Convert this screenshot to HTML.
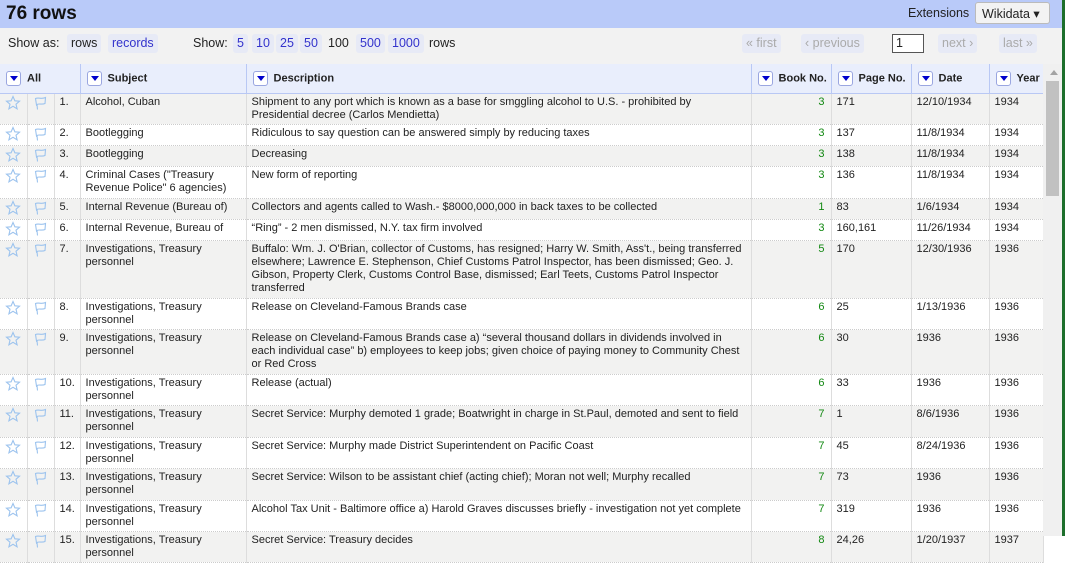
<!DOCTYPE html>
<html><head><meta charset="utf-8"><style>
*{box-sizing:border-box;margin:0;padding:0}
body{width:1065px;height:536px;overflow:hidden;background:#fff;font-family:"Liberation Sans",Arial,sans-serif;font-size:11px;color:#222;position:relative}
#top{position:absolute;left:0;top:0;width:1062px;height:28px;background:#b9caf9}
#top h1{position:absolute;left:6px;top:3px;font-size:19px;font-weight:bold;color:#111}
#ext{position:absolute;left:908px;top:6px;font-size:12.5px}
#wd{position:absolute;left:975px;top:2px;width:75px;height:22px;border:1px solid #bbb;border-radius:3px;background:#f3f3f3;font-size:12.5px;padding:3px 0 0 6px}
#bar{position:absolute;left:0;top:28px;width:1062px;height:36px;background:#f2f2f2;font-size:12.5px}
.t{position:absolute;top:8px}
.b{position:absolute;top:6px;height:19px;padding:2px 4px;background:#e7eaf6;border-radius:3px;color:#3333cc}
#pg{position:absolute;left:892px;top:6px;width:32px;height:19px;border:1px solid #555;background:#fff;padding:1px 3px}
table{position:absolute;left:0;top:64px;border-collapse:collapse;table-layout:fixed;width:1043px}
th{height:29px;background:#e9eefc;border-right:1px solid #b9c8f4;border-bottom:1px solid #b9c8f4;text-align:left;font-size:11px;font-weight:bold;padding-left:6px;white-space:nowrap;overflow:hidden}
.dd{display:inline-block;width:15px;height:15px;border:1px solid #9aa6e0;border-radius:3px;background:#fff;vertical-align:middle;margin-right:6px;position:relative}
.dd:after{content:"";position:absolute;left:3px;top:4px;border-left:4px solid transparent;border-right:4px solid transparent;border-top:5px solid #0000cc}
td{vertical-align:top;padding:2px 5px 0 5px;line-height:13px;border-right:1px solid #ddd;border-bottom:1px dotted #ccc;overflow:hidden}
tr.o td{background:#f2f2f1}
td.n{text-align:right;color:#118811;padding-right:6px}
td.i{padding:1px 0 0 5px}
td.i svg{display:block}
</style></head><body>
<div id="top"><h1>76 rows</h1><div id="ext">Extensions</div><div id="wd">Wikidata ▾</div></div>
<div id="bar">
<span class="t" style="left:8px">Show as:</span>
<span class="b" style="left:67px;color:#222">rows</span>
<span class="b" style="left:108px">records</span>
<span class="t" style="left:193px">Show:</span>
<span class="b" style="left:233px">5</span><span class="b" style="left:252px">10</span><span class="b" style="left:276px">25</span><span class="b" style="left:300px">50</span>
<span class="t" style="left:328px;color:#222">100</span>
<span class="b" style="left:356px">500</span><span class="b" style="left:388px">1000</span>
<span class="t" style="left:429px">rows</span>
<span class="b" style="left:742px;color:#aaa">« first</span>
<span class="b" style="left:801px;color:#aaa">‹ previous</span>
<div id="pg">1</div>
<span class="b" style="left:938px;color:#aaa">next ›</span>
<span class="b" style="left:999px;color:#aaa">last »</span>
</div>
<svg width="0" height="0" style="position:absolute"><defs>
<symbol id="st" viewBox="0 0 16 16"><path d="M8 1.5l1.9 4.3 4.6.4-3.5 3 1.1 4.6L8 11.3l-4.1 2.5 1.1-4.6-3.5-3 4.6-.4z" fill="none" stroke="#9cc3ee" stroke-width="1.1"/></symbol>
<symbol id="fl" viewBox="0 0 16 16"><path d="M2.5 3.5c3-1.5 6 1 10-1l-.5 6c-2 1-4 .5-6 .5-1.5 0-2.5 1-2.5 1zM4 9.5l.5 5" fill="none" stroke="#9cc3ee" stroke-width="1.1"/></symbol>
</defs></svg>
<table>
<colgroup><col style="width:27px"><col style="width:27px"><col style="width:26px"><col style="width:166px"><col style="width:505px"><col style="width:80px"><col style="width:80px"><col style="width:78px"><col style="width:54px"></colgroup>
<tr><th colspan="3"><span class="dd"></span>All</th><th><span class="dd"></span>Subject</th><th><span class="dd"></span>Description</th><th style="text-align:right;padding-right:4px"><span class="dd"></span>Book No.</th><th><span class="dd"></span>Page No.</th><th><span class="dd"></span>Date</th><th><span class="dd"></span>Year</th></tr>
<tr class="o" style="height:31px"><td class="i"><svg width="16" height="16"><use href="#st"/></svg></td><td class="i"><svg width="16" height="16"><use href="#fl"/></svg></td><td>1.</td><td>Alcohol, Cuban</td><td>Shipment to any port which is known as a base for smggling alcohol to U.S. - prohibited by Presidential decree (Carlos Mendietta)</td><td class="n">3</td><td>171</td><td>12/10/1934</td><td>1934</td></tr>
<tr style="height:21px"><td class="i"><svg width="16" height="16"><use href="#st"/></svg></td><td class="i"><svg width="16" height="16"><use href="#fl"/></svg></td><td>2.</td><td>Bootlegging</td><td>Ridiculous to say question can be answered simply by reducing taxes</td><td class="n">3</td><td>137</td><td>11/8/1934</td><td>1934</td></tr>
<tr class="o" style="height:21px"><td class="i"><svg width="16" height="16"><use href="#st"/></svg></td><td class="i"><svg width="16" height="16"><use href="#fl"/></svg></td><td>3.</td><td>Bootlegging</td><td>Decreasing</td><td class="n">3</td><td>138</td><td>11/8/1934</td><td>1934</td></tr>
<tr style="height:32px"><td class="i"><svg width="16" height="16"><use href="#st"/></svg></td><td class="i"><svg width="16" height="16"><use href="#fl"/></svg></td><td>4.</td><td>Criminal Cases ("Treasury Revenue Police" 6 agencies)</td><td>New form of reporting</td><td class="n">3</td><td>136</td><td>11/8/1934</td><td>1934</td></tr>
<tr class="o" style="height:21px"><td class="i"><svg width="16" height="16"><use href="#st"/></svg></td><td class="i"><svg width="16" height="16"><use href="#fl"/></svg></td><td>5.</td><td style="white-space:nowrap">Internal Revenue (Bureau of)</td><td>Collectors and agents called to Wash.- $8000,000,000 in back taxes to be collected</td><td class="n">1</td><td>83</td><td>1/6/1934</td><td>1934</td></tr>
<tr style="height:21px"><td class="i"><svg width="16" height="16"><use href="#st"/></svg></td><td class="i"><svg width="16" height="16"><use href="#fl"/></svg></td><td>6.</td><td style="white-space:nowrap">Internal Revenue, Bureau of</td><td>“Ring” - 2 men dismissed, N.Y. tax firm involved</td><td class="n">3</td><td>160,161</td><td>11/26/1934</td><td>1934</td></tr>
<tr class="o" style="height:58px"><td class="i"><svg width="16" height="16"><use href="#st"/></svg></td><td class="i"><svg width="16" height="16"><use href="#fl"/></svg></td><td>7.</td><td>Investigations, Treasury personnel</td><td>Buffalo: Wm. J. O'Brian, collector of Customs, has resigned; Harry W. Smith, Ass't., being transferred elsewhere; Lawrence E. Stephenson, Chief Customs Patrol Inspector, has been dismissed; Geo. J. Gibson, Property Clerk, Customs Control Base, dismissed; Earl Teets, Customs Patrol Inspector transferred</td><td class="n">5</td><td>170</td><td>12/30/1936</td><td>1936</td></tr>
<tr style="height:31px"><td class="i"><svg width="16" height="16"><use href="#st"/></svg></td><td class="i"><svg width="16" height="16"><use href="#fl"/></svg></td><td>8.</td><td>Investigations, Treasury personnel</td><td>Release on Cleveland-Famous Brands case</td><td class="n">6</td><td>25</td><td>1/13/1936</td><td>1936</td></tr>
<tr class="o" style="height:45px"><td class="i"><svg width="16" height="16"><use href="#st"/></svg></td><td class="i"><svg width="16" height="16"><use href="#fl"/></svg></td><td>9.</td><td>Investigations, Treasury personnel</td><td>Release on Cleveland-Famous Brands case a) “several thousand dollars in dividends involved in each individual case” b) employees to keep jobs; given choice of paying money to Community Chest or Red Cross</td><td class="n">6</td><td>30</td><td>1936</td><td>1936</td></tr>
<tr style="height:31px"><td class="i"><svg width="16" height="16"><use href="#st"/></svg></td><td class="i"><svg width="16" height="16"><use href="#fl"/></svg></td><td>10.</td><td>Investigations, Treasury personnel</td><td>Release (actual)</td><td class="n">6</td><td>33</td><td>1936</td><td>1936</td></tr>
<tr class="o" style="height:32px"><td class="i"><svg width="16" height="16"><use href="#st"/></svg></td><td class="i"><svg width="16" height="16"><use href="#fl"/></svg></td><td>11.</td><td>Investigations, Treasury personnel</td><td>Secret Service: Murphy demoted 1 grade; Boatwright in charge in St.Paul, demoted and sent to field</td><td class="n">7</td><td>1</td><td>8/6/1936</td><td>1936</td></tr>
<tr style="height:31px"><td class="i"><svg width="16" height="16"><use href="#st"/></svg></td><td class="i"><svg width="16" height="16"><use href="#fl"/></svg></td><td>12.</td><td>Investigations, Treasury personnel</td><td>Secret Service: Murphy made District Superintendent on Pacific Coast</td><td class="n">7</td><td>45</td><td>8/24/1936</td><td>1936</td></tr>
<tr class="o" style="height:32px"><td class="i"><svg width="16" height="16"><use href="#st"/></svg></td><td class="i"><svg width="16" height="16"><use href="#fl"/></svg></td><td>13.</td><td>Investigations, Treasury personnel</td><td>Secret Service: Wilson to be assistant chief (acting chief); Moran not well; Murphy recalled</td><td class="n">7</td><td>73</td><td>1936</td><td>1936</td></tr>
<tr style="height:31px"><td class="i"><svg width="16" height="16"><use href="#st"/></svg></td><td class="i"><svg width="16" height="16"><use href="#fl"/></svg></td><td>14.</td><td>Investigations, Treasury personnel</td><td>Alcohol Tax Unit - Baltimore office a) Harold Graves discusses briefly - investigation not yet complete</td><td class="n">7</td><td>319</td><td>1936</td><td>1936</td></tr>
<tr class="o" style="height:31px"><td class="i"><svg width="16" height="16"><use href="#st"/></svg></td><td class="i"><svg width="16" height="16"><use href="#fl"/></svg></td><td>15.</td><td>Investigations, Treasury personnel</td><td>Secret Service: Treasury decides</td><td class="n">8</td><td>24,26</td><td>1/20/1937</td><td>1937</td></tr>
</table>
<div style="position:absolute;left:1043px;top:64px;width:19px;height:472px;background:#f0f0f0"></div>
<div style="position:absolute;left:1046px;top:81px;width:13px;height:115px;background:#c1c1c1"></div>
<div style="position:absolute;left:1050px;top:70px;border-left:4px solid transparent;border-right:4px solid transparent;border-bottom:5px solid #a3a3a3"></div>
<div style="position:absolute;left:1062px;top:0;width:3px;height:536px;background:#1d6f2c"></div>
</body></html>
